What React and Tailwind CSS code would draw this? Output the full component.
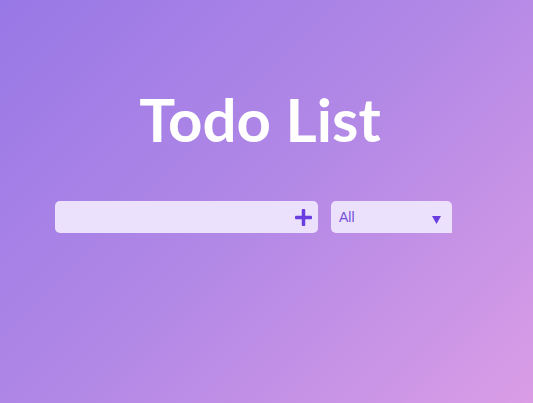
export default function App() {
  return (
    <div className="w-[533px] h-[403px] overflow-hidden bg-[linear-gradient(135deg,#9878e6_0%,#b288e6_50%,#da9de6_100%)] flex flex-col items-center" style={{ fontFamily: '"Noto Sans", sans-serif' }}>
      <h1 className="mt-[79px] ml-[-13px] text-[60px] leading-[80px] font-bold text-white" style={{ fontFamily: 'Lato, sans-serif' }}>Todo List</h1>
      <div className="mt-[42px] flex gap-[13px] w-full pl-[55px]">
        <div className="w-[263px] h-[32px] rounded-[5px] bg-[#ebe1fc] flex items-center justify-end pr-[6px]">
          <svg width="17" height="17" viewBox="0 0 17 17">
            <rect x="6.75" y="0" width="3.5" height="17" rx="1" fill="#6a3de0" />
            <rect x="0" y="6.75" width="17" height="3.5" rx="1" fill="#6a3de0" />
          </svg>
        </div>
        <div className="w-[121px] h-[32px] rounded-t-[5px] rounded-bl-[5px] bg-[#ebe1fc] flex items-center justify-between pl-[8px] pr-[11px]">
          <span className="text-[14px] text-[#7450d8]" style={{ fontFamily: '"Liberation Sans", sans-serif' }}>All</span>
          <svg width="9" height="8" viewBox="0 0 9 8" className="mt-[5px]">
            <polygon points="0,0 9,0 4.5,8" fill="#6a3de0" />
          </svg>
        </div>
      </div>
    </div>
  );
}
